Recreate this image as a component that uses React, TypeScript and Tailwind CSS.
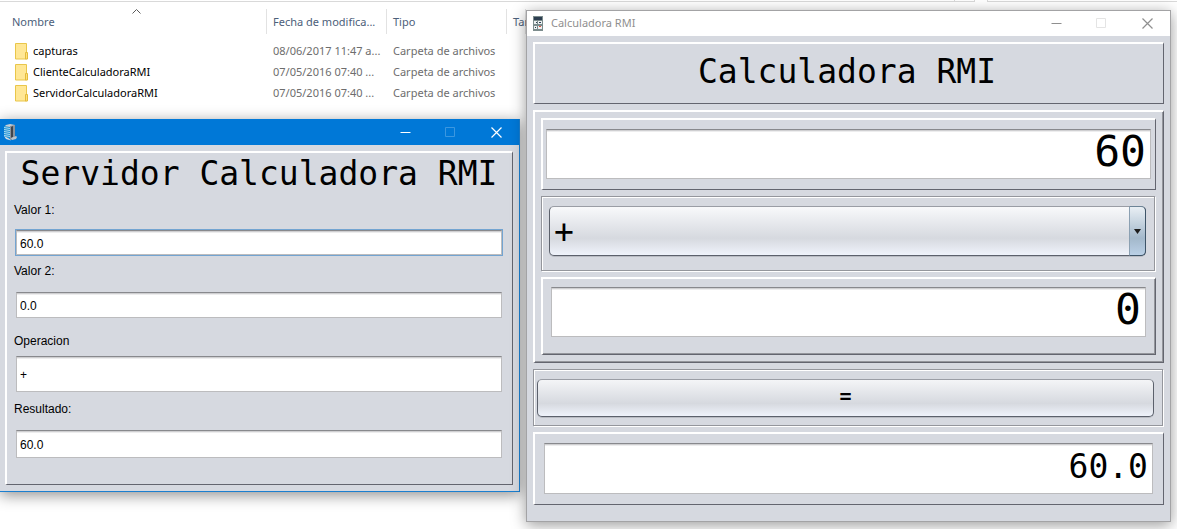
import type { ReactNode } from "react";

const raised =
  "border-t-2 border-l-2 border-r border-b border-t-white border-l-white border-r-[#63656f] border-b-[#63656f]";
const raisedDeep =
  "border-t-2 border-l-2 border-r border-b border-t-white border-l-white border-r-[#63656f] border-b-[#63656f] shadow-[inset_-1px_-1px_0_#94969c]";
const etched =
  "mr-px border border-[#94969c] shadow-[inset_1px_1px_0_#fff,1px_1px_0_#fff]";
const field =
  "block w-full border border-[#bcbcbe] border-t-[#88898d] bg-white text-black outline-none shadow-[inset_0_1px_0_#cfcfd1,inset_0_2px_0_#ededee]";
const mono = "font-['DejaVu_Sans_Mono',monospace]";

const files = [
  { name: "capturas", date: "08/06/2017 11:47 a..." },
  { name: "ClienteCalculadoraRMI", date: "07/05/2016 07:40 ..." },
  { name: "ServidorCalculadoraRMI", date: "07/05/2016 07:40 ..." },
];

function FolderIcon() {
  return (
    <svg width="14" height="17" viewBox="0 0 14 17" aria-hidden="true" className="shrink-0">
      <path d="M.5 .5h11v15.5h-11z" fill="#ffe795" stroke="#e9c64a" />
      <path d="M10.5 9.5h2v6.5h-2z" fill="#ffe07a" stroke="#e3bb3c" />
    </svg>
  );
}

function ServerIcon() {
  return (
    <svg width="14" height="17" viewBox="0 0 14 17" aria-hidden="true">
      <path d="M2 1l4-1 5 1v2H0z" fill="#c9ced3" />
      <path d="M6 2l5-1v11l-1 3-4 1z" fill="#8b9299" />
      <path d="M7 3l2-1v11l-2 1z" fill="#3f454d" />
      <path d="M0 2l6 1v11l-1 1-5-3z" fill="#1f8fd0" />
      <path d="M0 3.5l6 1M0 5.5l6 1M0 7.5l6 1M0 9.5l6 1M0 11.5l6 1" stroke="#a9dcf6" />
      <path d="M0 12l5 2.5 2 2L2 15z" fill="#d5dde3" />
      <path d="M7 14l5-2 1 1-1 2-4 1z" fill="#b9c4cc" />
    </svg>
  );
}

function CalculatorIcon() {
  return (
    <svg width="10" height="15" viewBox="0 0 10 15" aria-hidden="true" shapeRendering="crispEdges">
      <path d="M0 0h10v15H0z" fill="#7c8c8d" />
      <path d="M1 1h8v3H1z" fill="#2c3e50" />
      <path d="M1 5h3v3H1zM5 5h4v3H5zM1 10h3v3H1zM5 10h4v3H5z" fill="#ecf0f1" />
      <path d="M3 6h1v1H3zM6 6h2v1H6zM2 11h1v1H2z" fill="#2c3e50" />
      <path d="M6 10h2v1H6z" fill="#e74c3c" />
    </svg>
  );
}

function WindowControls({ muted }: { muted: string }) {
  return (
    <div className="flex h-full">
      <button type="button" aria-label="Minimizar" className="flex w-[45px] items-center justify-center">
        <svg width="11" height="11" viewBox="0 0 11 11" aria-hidden="true">
          <path d="M.5 5.5h10" stroke="currentColor" />
        </svg>
      </button>
      <button type="button" disabled aria-label="Maximizar" className={`flex w-[45px] items-center justify-center ${muted}`}>
        <svg width="11" height="11" viewBox="0 0 11 11" aria-hidden="true">
          <path d="M.5 .5h9v9h-9z" fill="none" stroke="currentColor" />
        </svg>
      </button>
      <button type="button" aria-label="Cerrar" className="flex w-[46px] items-center justify-center">
        <svg width="11" height="11" viewBox="0 0 11 11" aria-hidden="true">
          <path d="M.5 .5l10 10M10.5 .5l-10 10" stroke="currentColor" strokeWidth="1.2" />
        </svg>
      </button>
    </div>
  );
}

function HeaderCell({ children }: { children: ReactNode }) {
  return (
    <th className="overflow-hidden p-0 text-left font-normal text-[#4c607a]">
      <div className="flex h-[25px] items-center border-r border-[#e2e2e2] pt-0.5 pl-1.5">{children}</div>
    </th>
  );
}

function Explorer() {
  return (
    <section className="font-['Noto_Sans','Open_Sans',sans-serif] text-[11px]">
      <div className="flex h-0.5">
        <div className="w-[955px] border-r border-b border-[#d9d9d9]" />
        <div className="w-5 border-r border-b border-[#d9d9d9]" />
        <div className="w-3" />
        <div className="flex-1 border-b border-l border-[#d9d9d9]" />
      </div>
      <table className="w-full table-fixed border-collapse whitespace-nowrap">
        <colgroup>
          <col className="w-[267px]" />
          <col className="w-[120px]" />
          <col className="w-[120px]" />
          <col className="w-[19px]" />
          <col />
        </colgroup>
        <thead>
          <tr className="h-[39px]">
            <th className="relative p-0 text-left font-normal text-[#4c607a]">
              <svg width="9" height="5" viewBox="0 0 9 5" aria-hidden="true" className="absolute top-[7px] left-[132px]">
                <path d="M.5 4.5l4-4 4 4" fill="none" stroke="#5a5a5a" />
              </svg>
              <div className="flex h-[25px] items-center border-r border-[#e2e2e2] pt-0.5 pl-3">Nombre</div>
            </th>
            <HeaderCell>Fecha de modifica...</HeaderCell>
            <HeaderCell>Tipo</HeaderCell>
            <HeaderCell>Tamaño</HeaderCell>
            <td />
          </tr>
        </thead>
        <tbody>
          {files.map((file) => (
            <tr key={file.name} className="h-[21px] text-[#6d6d6d]">
              <td className="p-0 text-black">
                <div className="flex items-center gap-1 pl-[15px]">
                  <FolderIcon />
                  {file.name}
                </div>
              </td>
              <td className="p-0 pl-1.5">{file.date}</td>
              <td className="p-0 pl-1.5">Carpeta de archivos</td>
              <td />
              <td />
            </tr>
          ))}
        </tbody>
      </table>
    </section>
  );
}

function ServerField({
  id,
  label,
  value,
  className,
}: {
  id: string;
  label: string;
  value: string;
  className: string;
}) {
  return (
    <div className="flex flex-col">
      <label htmlFor={id} className="leading-4">
        {label}
      </label>
      <div className="pr-[10px] pl-0.5">
        <input id={id} defaultValue={value} className={`${field} px-[3px] pt-0.5 ${className}`} />
      </div>
    </div>
  );
}

function ServerWindow() {
  return (
    <section className="absolute top-[119px] left-0 w-[520px] border-r border-b border-[#1b7fcf] bg-[#d6d9e0] shadow-[0_3px_14px_rgba(0,0,0,0.45)]">
      <header className="flex h-[26px] items-center justify-between bg-[#0078d7] pl-1 text-white">
        <ServerIcon />
        <WindowControls muted="text-[#3b97e0]" />
      </header>
      <div className="pt-1.5 pr-1.5 pb-1.5 pl-[5px]">
        <div className={`${raised} pb-[26px] pl-[7px] font-['Liberation_Sans',sans-serif] text-xs text-black`}>
          <h1 className={`${mono} pt-px pr-2 text-center text-[33px] leading-10 whitespace-nowrap`}>
            Servidor Calculadora RMI
          </h1>
          <div className="flex flex-col gap-2 pt-2">
            <ServerField
              id="valor1"
              label="Valor 1:"
              value="60.0"
              className="mt-3 h-[25px] ring-1 ring-[#73a4d1]"
            />
            <ServerField id="valor2" label="Valor 2:" value="0.0" className="mt-[13px] mb-[7px] h-[26px]" />
            <ServerField id="operacion" label="Operacion" value="+" className="mt-[7px] mb-px h-9" />
            <ServerField id="resultado" label="Resultado:" value="60.0" className="mt-[13px] h-7" />
          </div>
        </div>
      </div>
    </section>
  );
}

function CalculatorWindow() {
  return (
    <section className="absolute top-[10px] right-[6px] left-[526px] border border-[#a3a3a5] bg-[#d6d9e0] shadow-[0_3px_14px_rgba(0,0,0,0.4)]">
      <header className="flex h-[25px] items-center justify-between bg-white text-[#8f8f8f]">
        <div className="flex items-center gap-2 pl-1.5 font-['Noto_Sans','Open_Sans',sans-serif] text-[11px]">
          <CalculatorIcon />
          Calculadora RMI
        </div>
        <WindowControls muted="text-[#e4e4e4]" />
      </header>
      <div className={`${mono} flex flex-col gap-1.5 px-1.5 pt-1.5 pb-4 text-black`}>
        <div className={`${raised} pt-2 pb-[11px]`}>
          <h1 className="pr-1 text-center text-[33px] leading-10 whitespace-nowrap">Calculadora RMI</h1>
        </div>

        <div className={`${raisedDeep} flex flex-col gap-1.5 pt-1.5 pr-[7px] pb-[7px] pl-1.5`}>
          <div className={`${raised} pt-[9px] pr-1 pb-[10px] pl-[3px]`}>
            <input
              aria-label="Primer valor"
              defaultValue="60"
              className={`${field} h-[50px] px-1 pb-1.5 text-right text-[43px]`}
            />
          </div>

          <div className={`${etched} pt-[9px] pr-2 pb-[14px] pl-[7px]`}>
            <div className="relative">
              <select
                aria-label="Operación"
                defaultValue="+"
                className="block h-[50px] w-full appearance-none rounded-[5px] border border-[#5c616c] border-t-[#9a9da5] bg-linear-to-b from-[#f8f9fb] via-[#d6d9df] via-65% to-[#eff3fb] pb-1.5 pl-1 text-[33px] shadow-[0_1px_0_#b9bcc3] outline-none"
              >
                <option>+</option>
                <option>-</option>
                <option>*</option>
                <option>/</option>
              </select>
              <div className="pointer-events-none absolute inset-y-0 right-0 flex w-[17px] items-center justify-center rounded-r-[5px] border border-[#3d5468] border-t-[#6d8496] border-l-[#8ba0b2] bg-linear-to-b from-[#e9eff4] via-[#a3b8cb] via-65% to-[#bad0e6]">
                <svg width="7" height="5" viewBox="0 0 7 5" aria-hidden="true">
                  <path d="M0 0h7L3.5 5z" fill="#1d1d1d" />
                </svg>
              </div>
            </div>
          </div>

          <div className={`${raisedDeep} pt-2 pr-[9px] pb-[17px] pl-2`}>
            <input
              aria-label="Segundo valor"
              defaultValue="0"
              className={`${field} h-[50px] px-1 pb-1.5 text-right text-[43px]`}
            />
          </div>
        </div>

        <div className={`${etched} pt-[9px] pr-2 pb-2 pl-[3px]`}>
          <button
            type="button"
            className="block h-[38px] w-full rounded-[5px] border border-[#5c616c] border-t-[#9a9da5] bg-linear-to-b from-[#f4f5f7] via-[#d6d9df] via-65% to-[#eff3fb] pb-1 text-xl font-bold shadow-[0_1px_0_#b9bcc3]"
          >
            =
          </button>
        </div>

        <div className={`${raised} pt-[9px] pr-[10px] pb-[10px] pl-[9px]`}>
          <input
            aria-label="Resultado"
            defaultValue="60.0"
            className={`${field} h-[51px] px-1 pb-1 text-right text-[33px]`}
          />
        </div>
      </div>
    </section>
  );
}

export default function App() {
  return (
    <main className="relative min-h-screen overflow-hidden bg-white">
      <Explorer />
      <ServerWindow />
      <CalculatorWindow />
    </main>
  );
}
